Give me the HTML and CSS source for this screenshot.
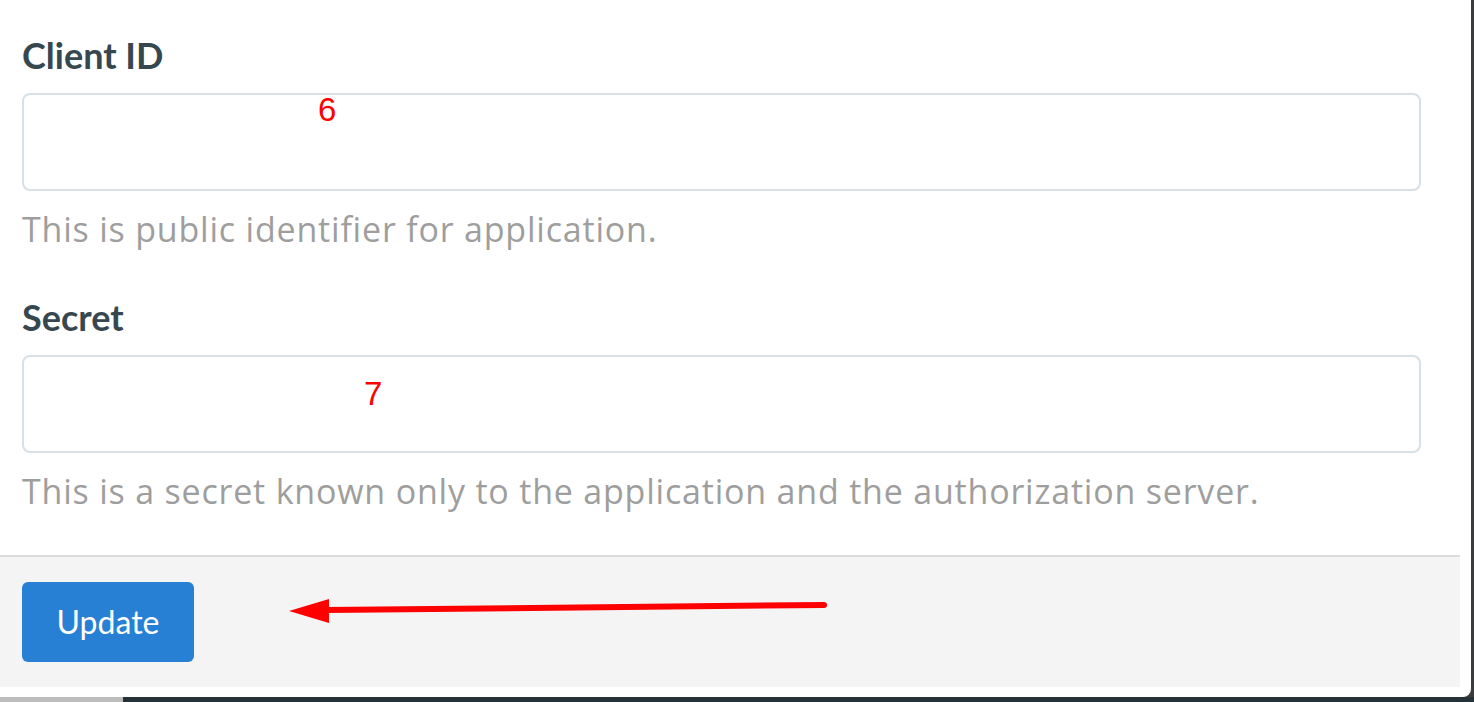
FILE: index.html
```html
<!DOCTYPE html>
<html>
<head>
<meta charset="utf-8">
<link rel="stylesheet" href="styles.css">
</head>
<body>
<div class="page">
  <div class="modal">
    <div class="modal-body">
      <div class="field">
        <label class="label">Client ID</label>
        <div class="input-wrap">
          <div class="input"></div>
          <span class="note note-6">6</span>
        </div>
        <p class="help">This is public identifier for application.</p>
      </div>
      <div class="field field-2">
        <label class="label">Secret</label>
        <div class="input-wrap">
          <div class="input"></div>
          <span class="note note-7">7</span>
        </div>
        <p class="help">This is a secret known only to the application and the authorization server.</p>
      </div>
    </div>
    <div class="modal-footer">
      <button class="btn">Update</button>
      <svg class="arrow" width="560" height="40" viewBox="0 0 560 40">
        <line x1="38" y1="22" x2="535" y2="17" stroke="#ff0000" stroke-width="6" stroke-linecap="round"/>
        <polygon points="0,23 40,11 40,35" fill="#ff0000"/>
      </svg>
    </div>
  </div>
  <div class="bottom">
    <div class="bottom-left"></div>
    <div class="bottom-right"></div>
  </div>
</div>
</body>
</html>
```

FILE: styles.css
```css
html, body {
  margin: 0;
  padding: 0;
}
body {
  width: 1474px;
  height: 702px;
  overflow: hidden;
  background: #3a3c3e;
  font-family: "Lato", "Liberation Sans", sans-serif;
}
.page {
  display: flex;
  flex-direction: column;
  width: 1474px;
  height: 702px;
}
.modal {
  width: 1460px;
  height: 687px;
  padding: 0 11px 10px 0;
  background: #ffffff;
  border-bottom-right-radius: 8px;
  display: flex;
  flex-direction: column;
}
.modal-body {
  flex: 1;
  padding: 33px 39px 0 22px;
}
.field {
  display: flex;
  flex-direction: column;
}
.field-2 {
  margin-top: 46px;
}
.label {
  font-size: 36px;
  line-height: 44px;
  font-weight: 700;
  color: #37474f;
  margin-bottom: 16px;
}
.input-wrap {
  position: relative;
}
.input {
  height: 94px;
  border: 2px solid #d7e0e4;
  border-radius: 8px;
  background: #fff;
}
.note {
  position: absolute;
  font-family: "Liberation Sans", sans-serif;
  font-size: 33px;
  line-height: 32px;
  color: #ff0000;
}
.note-6 {
  left: 296px;
  top: 1px;
}
.note-7 {
  left: 342px;
  top: 23px;
}
.help {
  margin: 18px 0 0 0;
  font-family: "Open Sans", "Lato", sans-serif;
  font-size: 34px;
  letter-spacing: 0.8px;
  line-height: 40px;
  color: #9e9e9e;
}
.modal-footer {
  position: relative;
  height: 132px;
  border-top: 2px solid #dcdcdc;
  background: #f4f4f4;
  padding: 25px 0 0 22px;
  box-sizing: border-box;
}
.btn {
  width: 172px;
  height: 80px;
  border: none;
  border-radius: 6px;
  background: #2780d4;
  color: #ffffff;
  font-family: "Lato", "Liberation Sans", sans-serif;
  font-size: 32px;
  line-height: 76px;
  padding: 0;
}
.arrow {
  position: absolute;
  left: 289px;
  top: 31px;
}
.bottom {
  display: flex;
  height: 5px;
}
.bottom-left {
  width: 123px;
  background: #bdbdbd;
}
.bottom-right {
  flex: 1;
  background: #263238;
}
```
